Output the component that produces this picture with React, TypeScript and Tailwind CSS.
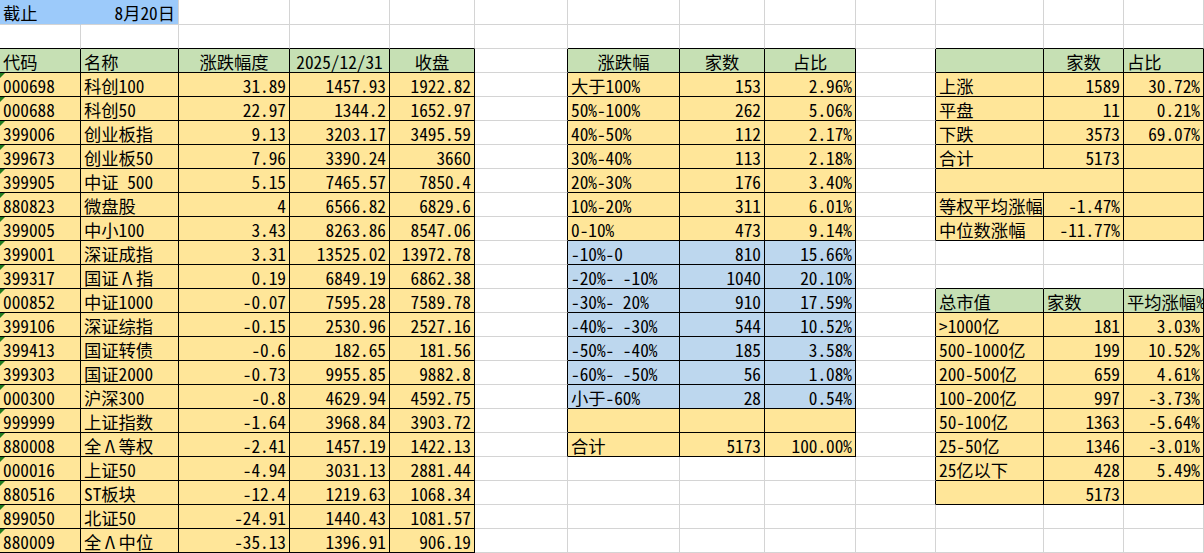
// Sheet snapshot: index returns vs 2025/12/31 close, distribution buckets, up/down counts, market-cap buckets.
// Laid out as an Excel-like grid: 13 columns, 24px rows, black "thin" borders around the tables.

type Fill = 'g' | 'y' | 'b' | 's';
type Align = 'l' | 'r' | 'c';
type Cell = { t?: string; a?: Align; f?: Fill; box?: boolean; tri?: boolean; span?: number };

const ROWS = 24;
const COLS = 13;

const BG: Record<Fill, string> = {
  g: 'bg-[#c6e0b4]',
  y: 'bg-[#ffe699]',
  b: 'bg-[#bdd7ee]',
  s: 'bg-[#9ccafa]',
};

const R_LINE: Record<Fill | 'black' | 'gray', string> = {
  black: 'border-r-black',
  gray: 'border-r-[#d4d4d4]',
  g: 'border-r-[#c6e0b4]',
  y: 'border-r-[#ffe699]',
  b: 'border-r-[#bdd7ee]',
  s: 'border-r-[#9ccafa]',
};

const B_LINE: Record<Fill | 'black' | 'gray', string> = {
  black: 'border-b-black',
  gray: 'border-b-[#d4d4d4]',
  g: 'border-b-[#c6e0b4]',
  y: 'border-b-[#ffe699]',
  b: 'border-b-[#bdd7ee]',
  s: 'border-b-[#9ccafa]',
};

const ALIGN: Record<Align, string> = {
  l: 'text-left',
  r: 'text-right',
  c: 'text-center',
};

const INDEX_ROWS: [string, string, string, string, string][] = [
  ['000698', '科创100', '31.89', '1457.93', '1922.82'],
  ['000688', '科创50', '22.97', '1344.2', '1652.97'],
  ['399006', '创业板指', '9.13', '3203.17', '3495.59'],
  ['399673', '创业板50', '7.96', '3390.24', '3660'],
  ['399905', '中证 500', '5.15', '7465.57', '7850.4'],
  ['880823', '微盘股', '4', '6566.82', '6829.6'],
  ['399005', '中小100', '3.43', '8263.86', '8547.06'],
  ['399001', '深证成指', '3.31', '13525.02', '13972.78'],
  ['399317', '国证Λ指', '0.19', '6849.19', '6862.38'],
  ['000852', '中证1000', '-0.07', '7595.28', '7589.78'],
  ['399106', '深证综指', '-0.15', '2530.96', '2527.16'],
  ['399413', '国证转债', '-0.6', '182.65', '181.56'],
  ['399303', '国证2000', '-0.73', '9955.85', '9882.8'],
  ['000300', '沪深300', '-0.8', '4629.94', '4592.75'],
  ['999999', '上证指数', '-1.64', '3968.84', '3903.72'],
  ['880008', '全Λ等权', '-2.41', '1457.19', '1422.13'],
  ['000016', '上证50', '-4.94', '3031.13', '2881.44'],
  ['880516', 'ST板块', '-12.4', '1219.63', '1068.34'],
  ['899050', '北证50', '-24.91', '1440.43', '1081.57'],
  ['880009', '全Λ中位', '-35.13', '1396.91', '906.19'],
];

const BUCKETS: [string, string, string, Fill][] = [
  ['大于100%', '153', '2.96%', 'y'],
  ['50%-100%', '262', '5.06%', 'y'],
  ['40%-50%', '112', '2.17%', 'y'],
  ['30%-40%', '113', '2.18%', 'y'],
  ['20%-30%', '176', '3.40%', 'y'],
  ['10%-20%', '311', '6.01%', 'y'],
  ['0-10%', '473', '9.14%', 'y'],
  ['-10%-0', '810', '15.66%', 'b'],
  ['-20%- -10%', '1040', '20.10%', 'b'],
  ['-30%- 20%', '910', '17.59%', 'b'],
  ['-40%- -30%', '544', '10.52%', 'b'],
  ['-50%- -40%', '185', '3.58%', 'b'],
  ['-60%- -50%', '56', '1.08%', 'b'],
  ['小于-60%', '28', '0.54%', 'b'],
  ['', '', '', 'y'],
  ['合计', '5173', '100.00%', 'y'],
];

const CAP_ROWS: [string, string, string][] = [
  ['>1000亿', '181', '3.03%'],
  ['500-1000亿', '199', '10.52%'],
  ['200-500亿', '659', '4.61%'],
  ['100-200亿', '997', '-3.73%'],
  ['50-100亿', '1363', '-5.64%'],
  ['25-50亿', '1346', '-3.01%'],
  ['25亿以下', '428', '5.49%'],
  ['', '5173', ''],
];

function buildSheet() {
  const grid: (Cell | null)[][] = Array.from({ length: ROWS }, () =>
    Array.from({ length: COLS }, () => ({}) as Cell),
  );
  const put = (r: number, c: number, cell: Cell) => {
    grid[r][c] = cell;
    for (let i = 1; i < (cell.span ?? 1); i++) grid[r][c + i] = null;
  };

  // Row 1: cut-off date
  put(0, 0, { t: '截止', a: 'l', f: 's' });
  put(0, 1, { t: '8月20日', a: 'r', f: 's' });

  // Table 1: indices (A-E, rows 3-23)
  ['代码', '名称'].forEach((t, i) => put(2, i, { t, a: 'l', f: 'g', box: true }));
  ['涨跌幅度', '2025/12/31', '收盘'].forEach((t, i) => put(2, i + 2, { t, a: 'c', f: 'g', box: true }));
  INDEX_ROWS.forEach(([code, name, chg, base, close], i) => {
    const r = 3 + i;
    put(r, 0, { t: code, a: 'l', f: 'y', box: true, tri: true });
    put(r, 1, { t: name, a: 'l', f: 'y', box: true });
    put(r, 2, { t: chg, a: 'r', f: 'y', box: true });
    put(r, 3, { t: base, a: 'r', f: 'y', box: true });
    put(r, 4, { t: close, a: 'r', f: 'y', box: true });
  });

  // Table 2: distribution (G-I, rows 3-19)
  ['涨跌幅', '家数', '占比'].forEach((t, i) => put(2, 6 + i, { t, a: 'c', f: 'g', box: true }));
  BUCKETS.forEach(([label, n, pct, f], i) => {
    const r = 3 + i;
    put(r, 6, { t: label, a: 'l', f, box: true });
    put(r, 7, { t: n, a: 'r', f, box: true });
    put(r, 8, { t: pct, a: 'r', f, box: true });
  });

  // Table 3: up / flat / down (K-M, rows 3-10)
  put(2, 10, { f: 'g', box: true });
  put(2, 11, { t: '家数', a: 'c', f: 'g', box: true });
  put(2, 12, { t: '占比', a: 'l', f: 'g', box: true });
  const updown: [string, string, string][] = [
    ['上涨', '1589', '30.72%'],
    ['平盘', '11', '0.21%'],
    ['下跌', '3573', '69.07%'],
    ['合计', '5173', ''],
  ];
  updown.forEach(([label, n, pct], i) => {
    const r = 3 + i;
    put(r, 10, { t: label, a: 'l', f: 'y', box: true });
    put(r, 11, { t: n, a: 'r', f: 'y', box: true });
    put(r, 12, { t: pct, a: 'r', f: 'y', box: true });
  });
  put(7, 10, { f: 'y', box: true, span: 2 });
  put(7, 12, { f: 'y', box: true });
  put(8, 10, { t: '等权平均涨幅', a: 'l', f: 'y', box: true });
  put(8, 11, { t: '-1.47%', a: 'r', f: 'y', box: true });
  put(8, 12, { f: 'y', box: true });
  put(9, 10, { t: '中位数涨幅', a: 'l', f: 'y', box: true });
  put(9, 11, { t: '-11.77%', a: 'r', f: 'y', box: true });
  put(9, 12, { f: 'y', box: true });

  // Table 4: market-cap buckets (K-M, rows 13-21)
  ['总市值', '家数', '平均涨幅%'].forEach((t, i) => put(12, 10 + i, { t, a: 'l', f: 'g', box: true }));
  CAP_ROWS.forEach(([label, n, avg], i) => {
    const r = 13 + i;
    put(r, 10, { t: label, a: 'l', f: 'y', box: true });
    put(r, 11, { t: n, a: 'r', f: 'y', box: true });
    put(r, 12, { t: avg, a: 'r', f: 'y', box: true });
  });

  return grid;
}

function owner(grid: (Cell | null)[][], r: number, c: number): Cell | undefined {
  if (r >= ROWS || c >= COLS) return undefined;
  let cc = c;
  while (cc > 0 && grid[r][cc] === null) cc--;
  return grid[r][cc] ?? undefined;
}

function lineKey(cur: Cell, next: Cell | undefined): Fill | 'black' | 'gray' {
  if (cur.box || next?.box) return 'black';
  if (cur.f && next?.f) return cur.f;
  return 'gray';
}

// Λ is shown full-width in the sheet font; give it a 1em box.
function CellText({ t }: { t: string }) {
  if (!t.includes('Λ')) return <>{t}</>;
  const [before, after] = t.split('Λ');
  return (
    <>
      {before}
      <span className="inline-block w-[1em] text-center">Λ</span>
      {after}
    </>
  );
}

export default function App() {
  const grid = buildSheet();

  return (
    <div className="h-[553px] w-[1204px] overflow-hidden bg-white text-[17.3px] text-black font-['Noto_Sans_CJK_SC','Noto_Sans_CJK_JP',sans-serif] [font-feature-settings:'hwid'_1]">
      <div className="grid grid-cols-[81px_98px_111px_100px_85px_93px_112px_85px_91px_80px_108px_80px_80px] grid-rows-[25px_repeat(23,24px)]">
        {grid.map((row, r) =>
          row.map((cell, c) => {
            if (cell === null) return null;
            const span = cell.span ?? 1;
            const right = lineKey(cell, owner(grid, r, c + span));
            const below = lineKey(cell, owner(grid, r + 1, c));
            return (
              <div
                key={`${r}-${c}`}
                className={[
                  'relative overflow-hidden whitespace-nowrap border-r border-b px-[3px] pt-[3px] leading-[20px]',
                  span === 2 ? 'col-span-2' : '',
                  R_LINE[right],
                  B_LINE[below],
                  cell.f ? BG[cell.f] : '',
                  ALIGN[cell.a ?? 'l'],
                ].join(' ')}
              >
                {cell.tri && (
                  <span className="absolute left-0 top-0 h-0 w-0 border-t-[5px] border-r-[5px] border-t-[#1f7a1f] border-r-transparent" />
                )}
                {cell.t && <CellText t={cell.t} />}
              </div>
            );
          }),
        )}
      </div>
    </div>
  );
}
